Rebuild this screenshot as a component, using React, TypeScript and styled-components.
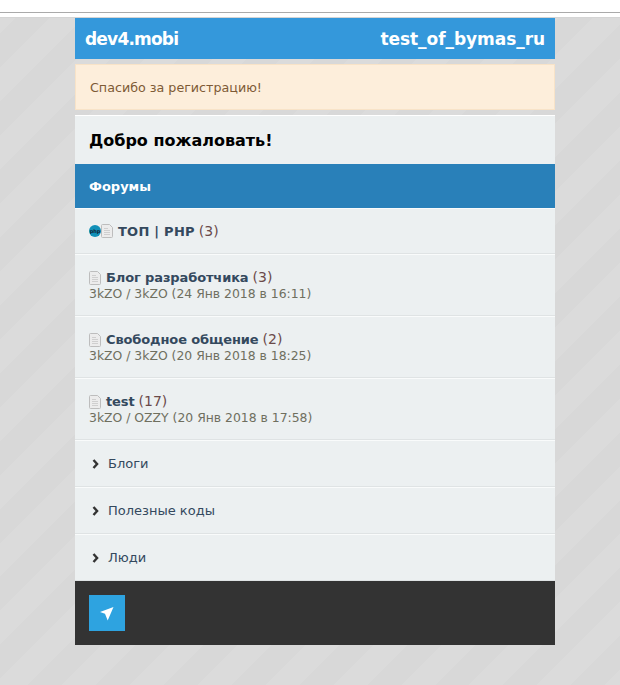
import React from 'react'
import styled, { createGlobalStyle } from 'styled-components'

const GlobalStyle = createGlobalStyle`
  html, body {
    margin: 0;
    padding: 0;
    height: 100%;
    background: #fff;
  }
  body {
    font-family: "DejaVu Sans", Verdana, sans-serif;
    font-size: 13px;
    color: #444;
  }
`

interface Forum {
  title: string
  count: number
  last: string
}

const forums: Forum[] = [
  { title: 'Блог разработчика', count: 3, last: '3kZO / 3kZO (24 Янв 2018 в 16:11)' },
  { title: 'Свободное общение', count: 2, last: '3kZO / 3kZO (20 Янв 2018 в 18:25)' },
  { title: 'test', count: 17, last: '3kZO / OZZY (20 Янв 2018 в 17:58)' },
]

const links = ['Блоги', 'Полезные коды', 'Люди']

const PageIcon = () => (
  <PageSvg viewBox="0 0 12 14" width="12" height="14">
    <path d="M1.5.5h7l3 3v9a1 1 0 0 1-1 1h-9a1 1 0 0 1-1-1v-11a1 1 0 0 1 1-1z" fill="#ececec" stroke="#bdbdbd" />
    <path d="M3 4.5h4M3 6.5h6M3 8.5h6M3 10.5h6" stroke="#cfcfcf" />
  </PageSvg>
)

const App: React.FC = () => {
  return (
    <Page>
      <GlobalStyle />
      <TopBar>
        <TopLine />
      </TopBar>
      <Wrapper>
        <Header>
          <Logo $spacing={-0.8}>dev4.mobi</Logo>
          <Logo $spacing={-0.06}>test_of_bymas_ru</Logo>
        </Header>
        <Notice>Спасибо за регистрацию!</Notice>
        <Content>
          <Welcome>Добро пожаловать!</Welcome>
          <Section>Форумы</Section>
          <TopRow>
            <Badge>
              <BadgeText>php</BadgeText>
            </Badge>
            <PageIcon />
            <TopTitle>ТОП | PHP</TopTitle>
            <Count>(3)</Count>
          </TopRow>
          {forums.map((f) => (
            <ForumRow key={f.title}>
              <div>
                <PageIcon />
                <Title>{f.title}</Title>
                <Count>({f.count})</Count>
              </div>
              <Last>{f.last}</Last>
            </ForumRow>
          ))}
          {links.map((l) => (
            <LinkRow key={l}>
              <Chevron viewBox="0 0 8 10" width="8" height="10">
                <path d="M1.5 1l3.6 4-3.6 4" fill="none" stroke="#333" strokeWidth="2.4" />
              </Chevron>
              {l}
            </LinkRow>
          ))}
        </Content>
        <Footer>
          <SendButton>
            <svg viewBox="0 0 14 16" width="14" height="16">
              <path d="M13.5 2L7.7 15.5 5 8.7 0 7z" fill="#fff" />
            </svg>
          </SendButton>
        </Footer>
      </Wrapper>
    </Page>
  )
}

export default App

const Page = styled.div`
  min-height: 685px;
  box-sizing: border-box;
  padding-bottom: 40px;
  background: repeating-linear-gradient(
    135deg,
    #dbdbdb 0,
    #dbdbdb 24px,
    #d8d8d8 24px,
    #d8d8d8 48px
  );
`
const TopBar = styled.div`
  height: 5px;
  padding-top: 12px;
  background: #fff;
  border-bottom: 1px solid #d4d4d4;
`
const TopLine = styled.div`
  height: 1px;
  background: #aaa;
`
const Wrapper = styled.div`
  width: 480px;
  margin: 0 65px 0 75px;
`
const Header = styled.div`
  height: 41px;
  padding: 0 10px;
  background: #3498db;
  display: flex;
  align-items: center;
  justify-content: space-between;
`
const Logo = styled.div<{ $spacing: number }>`
  color: #fff;
  font-size: 17px;
  font-weight: bold;
  letter-spacing: ${(p) => p.$spacing}px;
`
const Notice = styled.div`
  height: 46px;
  box-sizing: border-box;
  margin: 5px 0;
  padding: 0 14px;
  display: flex;
  align-items: center;
  background: #fdeedb;
  border: 1px solid #f8e3c8;
  color: #7d5a35;
  font-size: 12.7px;
`
const Content = styled.div`
  background: #ecf0f1;
  border-top: 1px solid #fff;
`
const Welcome = styled.div`
  height: 48px;
  padding: 0 14px;
  display: flex;
  align-items: center;
  color: #000;
  font-size: 16px;
  font-weight: bold;
`
const Section = styled.div`
  height: 44px;
  padding: 0 14px;
  display: flex;
  align-items: center;
  background: #2980b9;
  color: #fff;
  font-weight: bold;
`
const Row = styled.div`
  box-sizing: border-box;
  padding: 0 14px;
  display: flex;
  border-top: 1px solid #f9fbfb;
  border-bottom: 1px solid #dfe3e4;
`
const TopRow = styled(Row)`
  height: 46px;
  align-items: center;
`
const ForumRow = styled(Row)`
  height: 62px;
  flex-direction: column;
  justify-content: center;
  line-height: 16px;
`
const PageSvg = styled.svg`
  vertical-align: -3px;
`
const Badge = styled.span`
  width: 12px;
  height: 12px;
  border-radius: 50%;
  background: #1190b8;
  display: inline-flex;
  align-items: center;
  justify-content: center;
  overflow: hidden;
`
const BadgeText = styled.span`
  font-size: 5px;
  font-weight: bold;
  color: #123;
`
const Title = styled.b`
  margin-left: 5px;
  color: #34495e;
  letter-spacing: -0.12px;
`
const TopTitle = styled(Title)`
  letter-spacing: 0.25px;
`
const Count = styled.span`
  margin-left: 4px;
  color: #6b4a4a;
  font-size: 14px;
`
const Last = styled.div`
  color: #6f6f5f;
  font-size: 12.4px;
`
const LinkRow = styled(Row)`
  height: 47px;
  padding: 0 17px;
  align-items: center;
  gap: 8px;
  color: #34495e;
`
const Chevron = styled.svg`
  flex: none;
`
const Footer = styled.div`
  height: 64px;
  padding: 0 14px;
  display: flex;
  align-items: center;
  background: #333;
`
const SendButton = styled.div`
  width: 36px;
  height: 36px;
  background: #2ea3e0;
  display: flex;
  align-items: center;
  justify-content: center;
`
